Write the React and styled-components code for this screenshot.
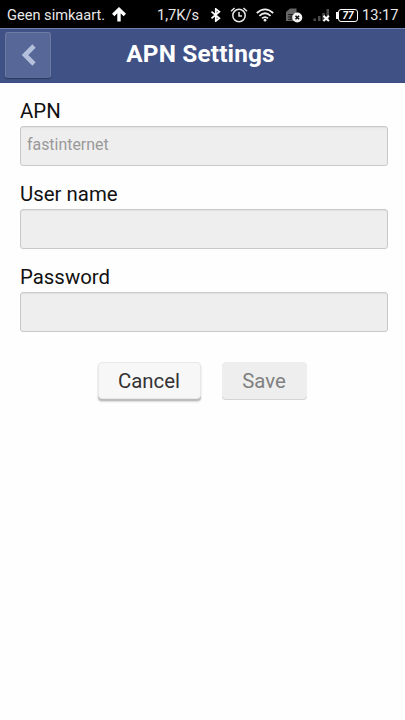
import React, { useState } from 'react';
import styled, { createGlobalStyle } from 'styled-components';

const App = () => {
  const [apn, setApn] = useState('fastinternet');
  const [userName, setUserName] = useState('');
  const [password, setPassword] = useState('');

  return (
    <Screen>
      <GlobalStyle />
      <StatusBar>
        <Carrier>Geen simkaart.</Carrier>
        <ArrowIcon />
        <Speed>1,7K/s</Speed>
        <BluetoothIcon />
        <AlarmIcon />
        <WifiIcon />
        <SimIcon />
        <SignalIcon />
        <Battery>77</Battery>
        <Clock>13:17</Clock>
      </StatusBar>

      <Header>
        <BackButton aria-label="Back">
          <svg width="16" height="22" viewBox="0 0 16 22">
            <path d="M13 2 L4 11 L13 20" fill="none" stroke="#b4c0dc" strokeWidth="4.6" />
          </svg>
        </BackButton>
        <Title>APN Settings</Title>
      </Header>

      <Form>
        <Field>
          <Label htmlFor="apn">APN</Label>
          <Input id="apn" disabled value={apn} onChange={(e) => setApn(e.target.value)} />
        </Field>
        <Field>
          <Label htmlFor="user">User name</Label>
          <Input id="user" disabled value={userName} onChange={(e) => setUserName(e.target.value)} />
        </Field>
        <Field>
          <Label htmlFor="pass">Password</Label>
          <Input id="pass" type="password" disabled value={password} onChange={(e) => setPassword(e.target.value)} />
        </Field>
        <Buttons>
          <Button $width={103}>Cancel</Button>
          <Button $width={85} disabled>Save</Button>
        </Buttons>
      </Form>
    </Screen>
  );
};

const ArrowIcon = () => (
  <Icon $left={7} width="14" height="16" viewBox="0 0 14 16">
    <path d="M7 14.5 V3 M1.2 8 L7 2.4 L12.8 8" fill="none" stroke="#fff" strokeWidth="3.4" />
  </Icon>
);

const BluetoothIcon = () => (
  <Icon $left={10} width="12" height="14" viewBox="0 0 12 14">
    <path d="M1.5 3.6 L9.3 10.2 L5.8 13 V1 L9.3 3.8 L1.5 10.4" fill="none" stroke="#fff" strokeWidth="1.8" />
  </Icon>
);

const AlarmIcon = () => (
  <Icon $left={8} width="18" height="16" viewBox="0 0 18 16">
    <g fill="none" stroke="#e8e8e8" strokeWidth="1.5">
      <circle cx="9" cy="8.5" r="6.2" />
      <path d="M9 5 V9 H12 M1 4.2 L4.6 1 M17 4.2 L13.4 1" />
    </g>
  </Icon>
);

const WifiIcon = () => (
  <Icon $left={8} width="18" height="14" viewBox="0 0 18 14">
    <g fill="none" stroke="#eee" strokeWidth="1.8">
      <path d="M0.8 5 Q9 -2.2 17.2 5" />
      <path d="M3.4 7.8 Q9 2.8 14.6 7.8" />
      <path d="M6 10.4 Q9 7.8 12 10.4" />
    </g>
    <circle cx="9" cy="12.2" r="1.4" fill="#eee" />
  </Icon>
);

const SimIcon = () => (
  <Icon $left={12} width="17" height="15" viewBox="0 0 17 15">
    <path d="M0 4 L4 0.5 H10.5 V13 H0 Z" fill="#666" />
    <path d="M2 6.5 H9 M2 9 H6 M2 11.4 H6 M5 6 V12" stroke="#1a1a1a" strokeWidth="0.9" />
    <circle cx="11.3" cy="9.5" r="5" fill="#f4f4f4" />
    <path d="M9.5 7.7 L13.1 11.3 M13.1 7.7 L9.5 11.3" stroke="#111" strokeWidth="1.6" />
  </Icon>
);

const SignalIcon = () => (
  <Icon $left={10} width="18" height="14" viewBox="0 0 18 14">
    <path d="M0.5 10.5 H3 V13 H0.5 Z M5 8 H7.5 V13 H5 Z M9.3 5 H11.8 V13 H9.3 Z M13.5 1 H16 V13 H13.5 Z" fill="#4d4d4d" />
    <path d="M10.5 7.7 L15.9 13.1 M15.9 7.7 L10.5 13.1" stroke="#fff" strokeWidth="2" />
  </Icon>
);

const GlobalStyle = createGlobalStyle`
  * {
    box-sizing: border-box;
  }
  body {
    margin: 0;
    background: #fff;
    font-family: Roboto, sans-serif;
  }
`;

const Screen = styled.div`
  display: flex;
  flex-direction: column;
  width: 100%;
  height: 720px;
  background: #fefefe;
`;

const StatusBar = styled.div`
  display: flex;
  align-items: center;
  height: 28px;
  padding-top: 2px;
  padding-left: 7px;
  background: #000;
  color: #e8e8e8;
  font-size: 14.6px;
  white-space: nowrap;
`;

const Carrier = styled.span`
  width: 98px;
`;

const Speed = styled.span`
  width: 43px;
  margin-left: 31px;
`;

const Icon = styled.svg`
  flex: none;
  margin-left: ${(props) => props.$left}px;
`;

const Battery = styled.span`
  position: relative;
  flex: none;
  width: 20px;
  height: 13px;
  margin-left: 7px;
  border: 1.5px solid #fff;
  border-radius: 3px;
  color: #fff;
  font-size: 10px;
  font-weight: 700;
  font-style: italic;
  line-height: 11px;
  text-align: center;
  &::before {
    content: '';
    position: absolute;
    left: -3px;
    top: 2px;
    width: 2px;
    height: 7px;
    background: #fff;
  }
`;

const Clock = styled.span`
  margin-left: 4px;
`;

const Header = styled.header`
  display: flex;
  align-items: flex-start;
  height: 55px;
  padding: 3px 5px;
  border-top: 1px solid #7380ad;
  border-bottom: 1px solid #394b80;
  background: #405186;
`;

const BackButton = styled.button`
  display: flex;
  align-items: center;
  justify-content: center;
  width: 46px;
  height: 46px;
  padding: 0 0 0 1px;
  border: 1px solid #6e7ba3;
  border-bottom-color: #5b6993;
  border-radius: 3px;
  background: #576797;
  box-shadow: 0 1px 1px #293962;
`;

const Title = styled.h1`
  flex: 1;
  margin: 7px 50px 0 0;
  color: #fff;
  font-size: 24.4px;
  font-weight: 700;
  letter-spacing: 0.15px;
  line-height: 30px;
  text-align: center;
`;

const Form = styled.div`
  padding: 15px 17px 0 20px;
`;

const Field = styled.div`
  height: 83.2px;
`;

const Label = styled.label`
  display: block;
  height: 28px;
  color: #111;
  font-size: 20.4px;
  line-height: 26px;
`;

const Input = styled.input`
  display: block;
  width: 100%;
  height: 39.5px;
  padding: 0 6px 3px;
  border: 1px solid #c9c9c9;
  border-radius: 3px;
  background: #eee;
  box-shadow: inset 0 1px 1px #e0e0e0;
  color: #999;
  font-family: inherit;
  font-size: 15.9px;
`;

const Buttons = styled.div`
  display: flex;
  justify-content: center;
  gap: 21px;
  padding: 14.4px 4px 0 0;
`;

const Button = styled.button`
  width: ${(props) => props.$width}px;
  height: 37px;
  padding: 1px 0 0;
  border: 1px solid #e8e8e8;
  border-radius: 4px;
  background: #f7f7f7;
  box-shadow: 0 2px 1px #bbb, 0 3px 2px #ddd;
  color: #333;
  font-family: inherit;
  font-size: 20.4px;
  &:disabled {
    border-color: #eee;
    background: #eee;
    box-shadow: 0 1px 0 #d4d4d4;
    color: #808080;
  }
`;

export default App;
